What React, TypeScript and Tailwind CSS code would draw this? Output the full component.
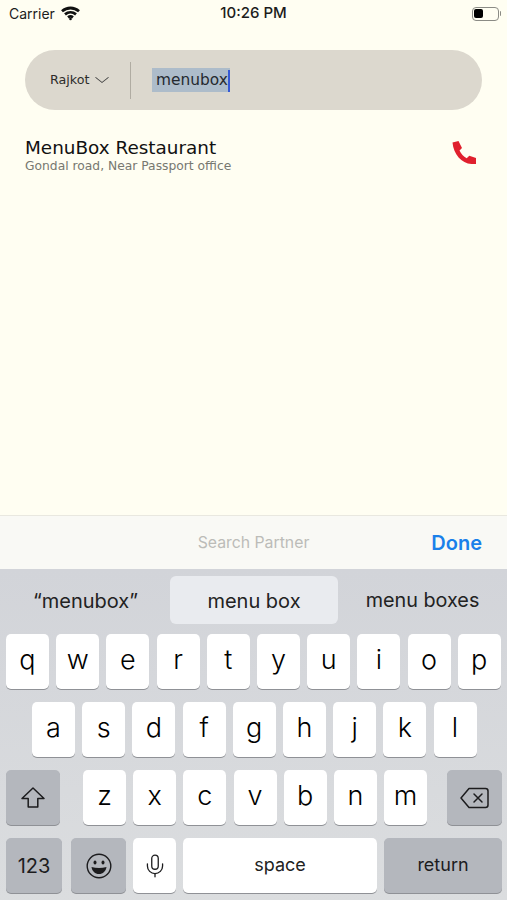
import { ChevronDown, Mic } from "lucide-react";

const sf = "font-['Inter','Liberation_Sans',sans-serif]";

const Key = ({ label, className = "" }: { label: string; className?: string }) => (
  <div
    className={`flex h-[55px] w-[43px] items-center justify-center rounded-[5px] bg-white pb-[3px] text-[27px] font-light text-black shadow-[0_1px_0_#8f9196] ${className}`}
  >
    {label}
  </div>
);

const GreyKey = ({ children, className = "" }: { children: React.ReactNode; className?: string }) => (
  <div
    className={`flex h-[55px] items-center justify-center rounded-[5px] bg-[#b4b7bd] text-[#1c1c1e] shadow-[0_1px_0_#8f9196] ${className}`}
  >
    {children}
  </div>
);

const Wifi = () => (
  <svg width="19" height="15" viewBox="0 0 19 15" fill="none" stroke="#111" strokeWidth="2.8">
    <path d="M1 5.200C6 .9 13 .9 18 5.200" />
    <path d="M4 8.400c3.200-2.600 7.800-2.600 11 0" />
    <path d="M7 11.300c1.500-1.100 3.500-1.100 5 0" />
    <circle cx="9.500" cy="13" r="1.300" fill="#111" stroke="none" />
  </svg>
);

const Battery = () => (
  <div className="flex items-center">
    <div className="flex h-[14px] w-[27px] items-center rounded-[4px] border border-[#8b8b85] p-[1.500px]">
      <div className="h-full w-[9px] rounded-[2px] bg-black" />
    </div>
    <div className="ml-[1px] h-[5px] w-[1.500px] rounded-r-sm bg-[#8b8b85]" />
  </div>
);

const Phone = () => (
  <svg width="26" height="26" viewBox="0 0 26 26" fill="#e0202e">
    <path d="M1.500 2.500 7.500 1l3.500 7-2.500 2.500c1.500 3.300 4 6 7.200 7.700l2.600-2.500 6.700 2.300V24h-4.500C10.500 23.500 2.500 14 1.500 2.500z" />
  </svg>
);

const Shift = () => (
  <svg width="26" height="24" viewBox="0 0 26 24" fill="none" stroke="#1c1c1e" strokeWidth="1.500" strokeLinejoin="round">
    <path d="M13 2 2 12.500h6.200V21h9.600v-8.500H24z" />
  </svg>
);

const Backspace = () => (
  <svg width="29" height="22" viewBox="0 0 29 22" fill="none" stroke="#1c1c1e" strokeWidth="1.500" strokeLinejoin="round" strokeLinecap="round">
    <path d="M9 1.500h16.500a2.500 2.500 0 0 1 2.500 2.500v14a2.500 2.500 0 0 1-2.500 2.500H9L1 11z" />
    <path d="m14 7 8 8M22 7l-8 8" />
  </svg>
);

const Smiley = () => (
  <svg width="26" height="26" viewBox="0 0 26 26" fill="none" stroke="#1c1c1e" strokeWidth="1.400">
    <circle cx="13" cy="13" r="11.800" />
    <ellipse cx="9" cy="9.500" rx="1.500" ry="2" fill="#1c1c1e" stroke="none" />
    <ellipse cx="17" cy="9.500" rx="1.500" ry="2" fill="#1c1c1e" stroke="none" />
    <path d="M5.500 14c4.800 1.200 10.200 1.200 15 0-.6 4.300-3.600 7-7.500 7s-6.900-2.700-7.500-7z" fill="#1c1c1e" stroke="none" />
  </svg>
);

export default function App() {
  return (
    <div className="flex h-[900px] w-[507px] flex-col overflow-hidden bg-[#fffef2] font-['DejaVu_Sans',sans-serif]">
      <div className={`grid h-[27px] grid-cols-[1fr_auto_1fr] items-center px-[6px] text-[#1c1c1c] ${sf}`}>
        <div className="ml-[3px] flex items-center gap-[6px] text-[14px]">
          Carrier <Wifi />
        </div>
        <div className="text-center text-[15px] font-medium">10:26 PM</div>
        <div className="justify-self-end">
          <Battery />
        </div>
      </div>

      <div className="ml-[25px] mt-[23px] flex h-[60px] w-[457px] items-center rounded-[30px] bg-[#dcd8ce] pl-[25px]">
        <div className="text-[12.700px] text-[#2d2d2a]">Rajkot</div>
        <ChevronDown size={20} strokeWidth={1} className="ml-[3px] scale-x-125 text-[#444]" />
        <div className="ml-[18px] h-[37px] w-px bg-[#b0aca2]" />
        <div className="ml-[21px] flex h-[24px] items-center bg-[#adbcca] pl-[3.500px] pt-[1px] text-[15.400px] text-[#252a30]">
          menubox
          <div className="h-[22px] w-[2px] bg-[#3559d6]" />
        </div>
      </div>

      <div className="mx-[25px] mt-[27px] flex items-start justify-between">
        <div className="flex flex-col">
          <div className="text-[18.400px] leading-[21px] text-[#111]">MenuBox Restaurant</div>
          <div className="pt-[1px] text-[12.300px] leading-[15px] text-[#777870]">Gondal road, Near Passport office</div>
        </div>
        <div className="mr-[5px] mt-[3px]">
          <Phone />
        </div>
      </div>

      <div className="flex-1" />

      <div className={`grid h-[54px] grid-cols-[1fr_auto_1fr] items-center border-t border-[#e9e8e0] bg-[#f9f9f5] px-[25px] ${sf}`}>
        <div />
        <div className="text-[15.800px] text-[#bcbcb8]">Search Partner</div>
        <div className="justify-self-end text-[20px] font-semibold text-[#1a80ea]">Done</div>
      </div>

      <div className={`flex h-[331px] flex-col bg-gradient-to-b from-[#d2d4d9] to-[#dbdddf] ${sf}`}>
        <div className="flex h-[65px] items-start pt-[7px] text-[20px] text-[#222]">
          <div className="flex h-[48px] w-[170px] items-center justify-center pl-[1px] pt-[1px]">“menubox”</div>
          <div className="flex h-[48px] w-[168px] items-center justify-center rounded-[6px] bg-[#e9ebef] pt-[1px]">menu box</div>
          <div className="flex h-[48px] flex-1 items-center justify-center pt-[1px] text-[19.800px]">menu boxes</div>
        </div>
        <div className="flex gap-[7.200px] pl-[6px]">
          {"qwertyuiop".split("").map((k) => (
            <Key key={k} label={k} />
          ))}
        </div>
        <div className="mt-[13px] flex gap-[7.200px] pl-[32px]">
          {"asdfghjkl".split("").map((k) => (
            <Key key={k} label={k} />
          ))}
        </div>
        <div className="mt-[13px] flex items-center pl-[6px] pr-[5px]">
          <GreyKey className="w-[54px]">
            <Shift />
          </GreyKey>
          <div className="ml-[23px] flex gap-[7.200px]">
            {"zxcvbnm".split("").map((k) => (
              <Key key={k} label={k} />
            ))}
          </div>
          <GreyKey className="ml-auto w-[55px]">
            <Backspace />
          </GreyKey>
        </div>
        <div className="mt-[13px] flex pl-[6px] pr-[5px]">
          <GreyKey className="w-[56px] text-[20px]">123</GreyKey>
          <GreyKey className="ml-[9px] w-[55px]">
            <Smiley />
          </GreyKey>
          <div className="ml-[7px] flex h-[55px] w-[43px] items-center justify-center rounded-[5px] bg-white shadow-[0_1px_0_#8f9196]">
            <Mic size={26} strokeWidth={1.200} className="text-[#1c1c1e]" />
          </div>
          <div className="ml-[7px] flex h-[55px] w-[194px] items-center justify-center rounded-[5px] bg-white pb-[2px] text-[18px] text-[#222] shadow-[0_1px_0_#8f9196]">
            space
          </div>
          <GreyKey className="ml-[7px] flex-1 pb-[2px] text-[18px]">return</GreyKey>
        </div>
      </div>
    </div>
  );
}
